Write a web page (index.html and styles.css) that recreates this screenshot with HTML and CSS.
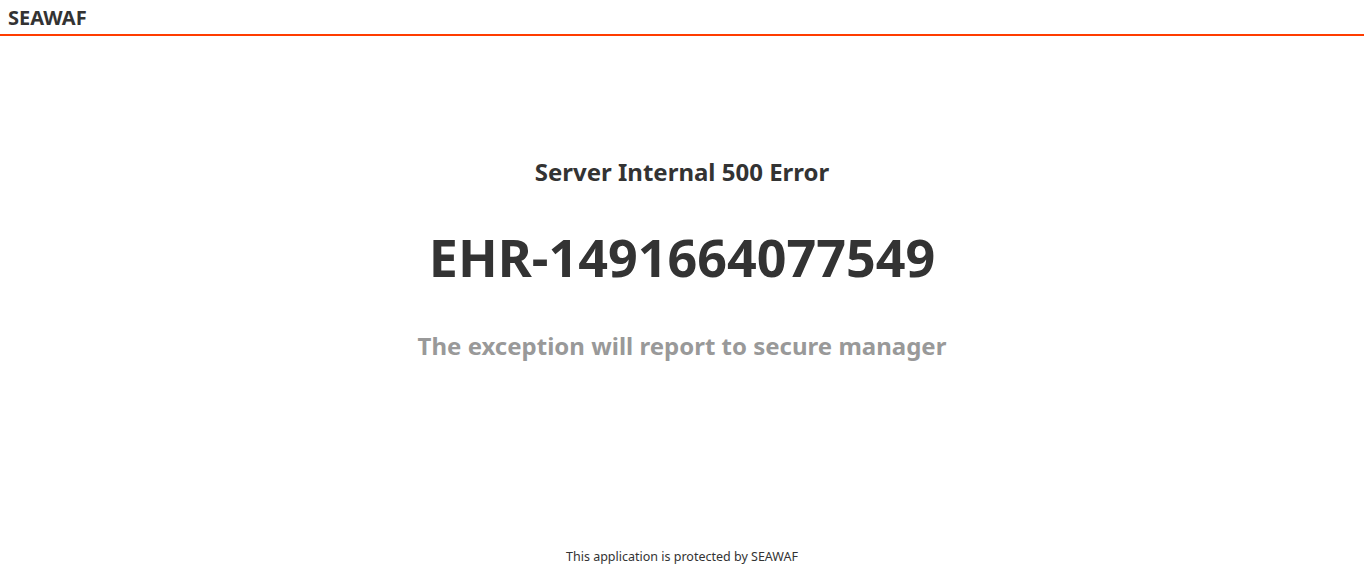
FILE: index.html
```html
<!DOCTYPE html>
<html>
<head>
<meta charset="utf-8">
<link rel="stylesheet" href="styles.css">
</head>
<body>
<header class="topbar"><span class="brand">SEAWAF</span></header>
<main class="content">
  <h2 class="title">Server Internal 500 Error</h2>
  <h1 class="code">EHR-1491664077549</h1>
  <p class="note">The exception will report to secure manager</p>
</main>
<footer class="footer">This application is protected by SEAWAF</footer>
</body>
</html>
```
FILE: styles.css
```css
html, body { margin: 0; padding: 0; }
body {
  font-family: "Noto Sans", "Open Sans", sans-serif;
  color: #333;
  background: #fff;
  width: 1364px;
  height: 576px;
  display: flex;
  flex-direction: column;
}
.topbar {
  height: 34px;
  border-bottom: 2px solid #ff3c00;
  padding-left: 8px;
  display: flex;
  align-items: center;
  box-sizing: content-box;
}
.brand { font-weight: 700; font-size: 20px; color: #333; }
.content {
  flex: 1;
  display: flex;
  flex-direction: column;
  align-items: center;
  padding-top: 119px;
}
.title { margin: 0; font-size: 24px; font-weight: 700; line-height: 34px; }
.code { margin: 38px 0 0; font-size: 52px; font-weight: 700; line-height: 60px; }
.note { margin: 42px 0 0; font-size: 24px; font-weight: 700; color: #999; line-height: 34px; }
.footer { text-align: center; font-size: 12.5px; padding-bottom: 11px; }
```
